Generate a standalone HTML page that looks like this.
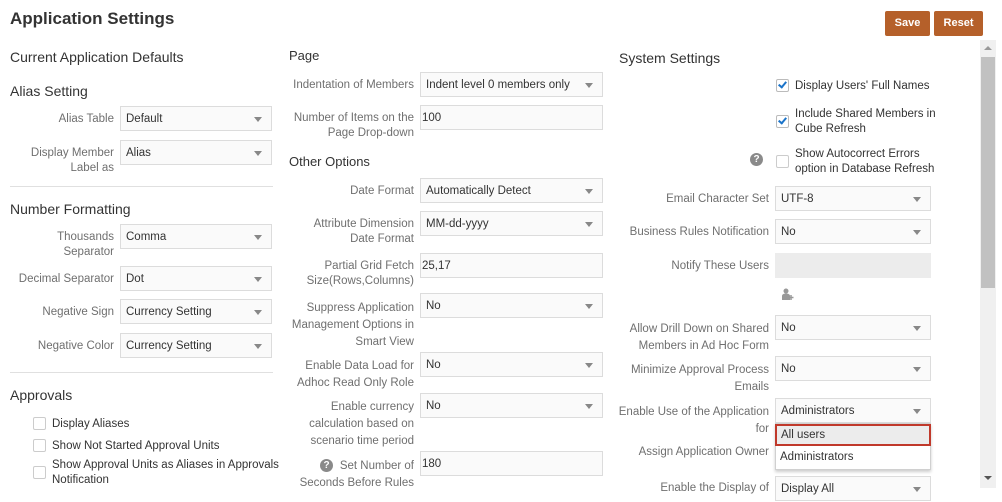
<!DOCTYPE html>
<html><head><meta charset="utf-8"><style>
body{margin:0;width:1002px;height:498px;overflow:hidden;background:#fff;font-family:"Liberation Sans",sans-serif;position:relative}
div,span{box-sizing:border-box}
.a{position:absolute}
.h1{position:absolute;left:10px;top:9px;font-size:17px;font-weight:bold;color:#333}
.h2{position:absolute;font-size:14px;color:#333}
.s{position:absolute;height:25px;border:1px solid #dcdcdc;background:#fafafa;font-size:11.5px;color:#333;padding-left:5px;line-height:25px;white-space:nowrap}
.s.dd::after{content:"";position:absolute;right:9px;top:10px;border-left:4px solid transparent;border-right:4px solid transparent;border-top:5px solid #888}
.l{position:absolute;text-align:right;color:#6f6f6f;font-size:11.5px;line-height:15px}
.L{right:888px}.M{right:588px}.R{right:233px}
.c1{left:120px;width:152px}.c2{left:420px;width:183px}.c3{left:775px;width:156px}
.hr{position:absolute;left:10px;width:263px;height:1px;background:#e0e0e0}
.cb{position:absolute;width:13px;height:13px;border:1px solid #ccc;background:#fff;border-radius:2px}
.cbt{position:absolute;font-size:11.5px;color:#333;line-height:15px}
.q{position:absolute;width:13px;height:13px;border-radius:50%;background:#8a8a8a;color:#fff;font-size:10px;font-weight:bold;text-align:center;line-height:13px}
.btn{position:absolute;top:11px;height:25px;background:#b5602a;color:#fff;font-size:11px;font-weight:bold;text-align:center;line-height:25px;border-radius:2px}
</style></head><body>
<div class="h1">Application Settings</div>
<div class="btn" style="left:885px;width:45px">Save</div>
<div class="btn" style="left:934px;width:49px">Reset</div>
<div class="a" style="left:980px;top:40px;width:16px;height:448px;background:#f0f0f0"></div>
<div class="a" style="left:981px;top:57px;width:14px;height:231px;background:#c1c1c1"></div>
<div class="a" style="left:984px;top:46px;border-left:4px solid transparent;border-right:4px solid transparent;border-bottom:4px solid #999"></div>
<div class="a" style="left:984px;top:476px;border-left:4px solid transparent;border-right:4px solid transparent;border-top:4px solid #555"></div>

<!-- left column -->
<div class="h2" style="left:10px;top:49px">Current Application Defaults</div>
<div class="h2" style="left:10px;top:83px">Alias Setting</div>
<div class="l L" style="top:112px">Alias Table</div><div class="s dd c1" style="top:106px">Default</div>
<div class="l L" style="top:146px">Display Member<br>Label as</div><div class="s dd c1" style="top:140px">Alias</div>
<div class="hr" style="top:186px"></div>
<div class="h2" style="left:10px;top:201px">Number Formatting</div>
<div class="l L" style="top:230px">Thousands<br>Separator</div><div class="s dd c1" style="top:224px">Comma</div>
<div class="l L" style="top:272px">Decimal Separator</div><div class="s dd c1" style="top:266px">Dot</div>
<div class="l L" style="top:305px">Negative Sign</div><div class="s dd c1" style="top:299px">Currency Setting</div>
<div class="l L" style="top:339px">Negative Color</div><div class="s dd c1" style="top:333px">Currency Setting</div>
<div class="hr" style="top:372px"></div>
<div class="h2" style="left:10px;top:387px">Approvals</div>
<div class="cb" style="left:33px;top:417px"></div><div class="cbt" style="left:52px;top:417px">Display Aliases</div>
<div class="cb" style="left:33px;top:439px"></div><div class="cbt" style="left:52px;top:439px">Show Not Started Approval Units</div>
<div class="cb" style="left:33px;top:466px"></div><div class="cbt" style="left:52px;top:458px">Show Approval Units as Aliases in Approvals<br>Notification</div>

<!-- middle column -->
<div class="h2" style="left:289px;top:48px;font-size:13px">Page</div>
<div class="l M" style="top:78px">Indentation of Members</div><div class="s dd c2" style="top:72px">Indent level 0 members only</div>
<div class="l M" style="top:111px">Number of Items on the<br>Page Drop-down</div><div class="s c2" style="top:105px;padding-left:1px">100</div>
<div class="h2" style="left:289px;top:154px;font-size:13px">Other Options</div>
<div class="l M" style="top:184px">Date Format</div><div class="s dd c2" style="top:178px">Automatically Detect</div>
<div class="l M" style="top:217px">Attribute Dimension<br>Date Format</div><div class="s dd c2" style="top:211px">MM-dd-yyyy</div>
<div class="l M" style="top:259px">Partial Grid Fetch<br>Size(Rows,Columns)</div><div class="s c2" style="top:253px;padding-left:1px">25,17</div>
<div class="l M" style="top:300px;line-height:17px">Suppress Application<br>Management Options in<br>Smart View</div><div class="s dd c2" style="top:293px">No</div>
<div class="l M" style="top:358px;line-height:17px">Enable Data Load for<br>Adhoc Read Only Role</div><div class="s dd c2" style="top:352px">No</div>
<div class="l M" style="top:399px;line-height:17px">Enable currency<br>calculation based on<br>scenario time period</div><div class="s dd c2" style="top:393px">No</div>
<div class="q" style="left:320px;top:459px">?</div>
<div class="l M" style="top:458px;line-height:17px">Set Number of<br>Seconds Before Rules</div><div class="s c2" style="top:451px;padding-left:1px">180</div>

<!-- right column -->
<div class="h2" style="left:619px;top:50px">System Settings</div>
<div class="cb" style="left:776px;top:79px;border-color:#bbb"></div><div class="a" style="top:80px;width:5px;height:8px;border-right:2px solid #1a73c9;border-bottom:2px solid #1a73c9;transform:rotate(40deg);left:780px"></div>
<div class="cbt" style="left:795px;top:79px">Display Users' Full Names</div>
<div class="cb" style="left:776px;top:115px;border-color:#bbb"></div><div class="a" style="left:780px;top:116px;width:5px;height:8px;border-right:2px solid #1a73c9;border-bottom:2px solid #1a73c9;transform:rotate(40deg)"></div>
<div class="cbt" style="left:795px;top:107px">Include Shared Members in<br>Cube Refresh</div>
<div class="q" style="left:750px;top:153px">?</div>
<div class="cb" style="left:776px;top:155px"></div>
<div class="cbt" style="left:795px;top:147px">Show Autocorrect Errors<br>option in Database Refresh</div>
<div class="l R" style="top:192px">Email Character Set</div><div class="s dd c3" style="top:186px">UTF-8</div>
<div class="l R" style="top:225px">Business Rules Notification</div><div class="s dd c3" style="top:219px">No</div>
<div class="l R" style="top:259px">Notify These Users</div><div class="s c3" style="top:253px;background:#ececec;border-color:#ececec"></div>
<svg class="a" style="left:781px;top:288px" width="14" height="13" viewBox="0 0 14 13"><circle cx="5" cy="3" r="2.5" fill="#999"/><path d="M1 12V8c0-1.5 1.5-2.5 4-2.5s4 1 4 2.5v4z" fill="#999"/><path d="M10 7v5M7.5 9.5h5" stroke="#999" stroke-width="1.5"/></svg>
<div class="l R" style="top:321px;line-height:17px">Allow Drill Down on Shared<br>Members in Ad Hoc Form</div><div class="s dd c3" style="top:315px">No</div>
<div class="l R" style="top:362px;line-height:17px">Minimize Approval Process<br>Emails</div><div class="s dd c3" style="top:356px">No</div>
<div class="l R" style="top:404px;line-height:17px">Enable Use of the Application<br>for</div><div class="s dd c3" style="top:398px">Administrators</div>
<div class="l R" style="top:445px">Assign Application Owner</div>
<div class="l R" style="top:481px">Enable the Display of</div><div class="s dd c3" style="top:476px">Display All</div>
<div class="a" style="left:775px;top:423px;width:156px;height:47px;background:#fff;border:1px solid #d0d0d0;box-shadow:0 2px 3px rgba(0,0,0,.2)"></div>
<div class="a" style="left:775px;top:424px;width:156px;height:22px;background:#ececec;border:2px solid #c0392b;font-size:11.5px;color:#333;padding-left:4px;line-height:19px">All users</div>
<div class="a" style="left:780px;top:451px;font-size:11.5px;color:#333">Administrators</div>
</body></html>
